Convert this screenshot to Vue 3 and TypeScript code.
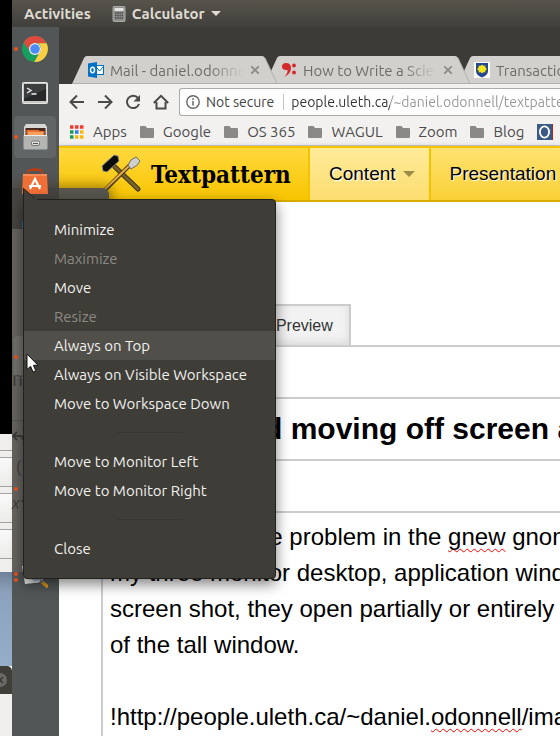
<script setup lang="ts">
import { ref } from 'vue'

interface MenuEntry {
  label?: string
  disabled?: boolean
  active?: boolean
}

interface DockEntry {
  app: string
  label: string
  dots: number
  lit?: boolean
}

const menu: MenuEntry[] = [
  { label: 'Minimize' },
  { label: 'Maximize', disabled: true },
  { label: 'Move' },
  { label: 'Resize', disabled: true },
  { label: 'Always on Top', active: true },
  { label: 'Always on Visible Workspace' },
  { label: 'Move to Workspace Down' },
  {},
  { label: 'Move to Monitor Left' },
  { label: 'Move to Monitor Right' },
  {},
  { label: 'Close' },
]

const dock: DockEntry[] = [
  { app: 'chrome', label: 'Chrome', dots: 1 },
  { app: 'terminal', label: 'Terminal', dots: 0 },
  { app: 'files', label: 'Files', dots: 1, lit: true },
  { app: 'software', label: 'Software', dots: 0 },
  { app: 'help', label: 'Help', dots: 0 },
  { app: '', label: '', dots: 0 },
  { app: '', label: '', dots: 0 },
  { app: 'calculator', label: 'Calculator', dots: 1, lit: true },
  { app: '', label: '', dots: 0 },
  { app: '', label: '', dots: 0 },
  { app: '', label: '', dots: 1 },
  { app: '', label: '', dots: 0 },
  { app: 'viewer', label: 'Image viewer', dots: 2 },
]

const tabs = [
  { icon: 'outlook', title: 'Mail - daniel.odonnell' },
  { icon: 'notes', title: 'How to Write a Scientific' },
  { icon: 'crest', title: 'Transactions' },
]

const bookmarks = ['Google', 'OS 365', 'WAGUL', 'Zoom', 'Blog']

const keypad = ['', '(', 'x²', '']

const address = ref('people.uleth.ca/~daniel.odonnell/textpattern')
const title = ref('Opened and moving off screen again')

const lines: { text: string; misspelt?: boolean }[][] = [
  [{ text: "I've found a little problem in the " }, { text: 'gnew', misspelt: true }, { text: ' gnome shell' }],
  [{ text: 'my three monitor desktop, application windows' }],
  [{ text: 'screen shot, they open partially or entirely off' }],
  [{ text: 'of the tall window.' }],
  [{ text: '' }],
  [{ text: '!http://people.uleth.ca/~daniel.' }, { text: 'odonnell', misspelt: true }, { text: '/images' }],
]
const body = ref(lines.map((l) => l.map((p) => p.text).join('')).join('\n'))
</script>

<template>
  <div class="desktop">
    <div class="neighbour">
      <div class="black"></div>
      <div class="keys"><i v-for="(k, n) in keypad" :key="n"></i></div>
      <div class="sky"></div>
      <div class="strip">
        <svg viewBox="0 0 12 28" width="12" height="28">
          <circle cx="0" cy="14" r="7" fill="#6b6963" />
          <path d="M-3 11L3 17M3 11L-3 17" stroke="#33322e" stroke-width="1.3" />
        </svg>
      </div>
      <div class="pale"></div>
    </div>

    <div class="screen">
      <header class="topbar">
        <button class="top-item">Activities</button>
        <button class="top-item app-item">
          <svg width="14" height="16" viewBox="0 0 14 16">
            <rect x="1" y="0.5" width="12" height="15" rx="1" fill="#8f8f8d" stroke="#a8a8a6" />
            <rect x="2.5" y="2" width="9" height="3" fill="#e4e4e2" />
            <path d="M3 7h8M3 9.500h8M3 12h8" stroke="#4b4b4b" stroke-width="1.500" stroke-dasharray="1.500 0.700" />
          </svg>
          <span>Calculator</span>
          <svg width="10" height="6" viewBox="0 0 10 6"><path d="M0 0h10L5 5z" fill="#dfdbd2" /></svg>
        </button>
      </header>

      <div class="work">
        <nav class="dock" aria-label="Dock">
          <template v-for="(d, n) in dock" :key="n">
            <component :is="d.app ? 'button' : 'div'" class="dock-item" :class="{ lit: d.lit }" :aria-label="d.label || undefined">
              <span class="dots"><i v-for="k in d.dots" :key="k"></i></span>
              <svg v-if="d.app === 'chrome'" width="26" height="26" viewBox="0 0 26 26">
                <circle cx="13" cy="13" r="13" fill="#17a05d" />
                <path d="M1.700 6.500A13 13 0 0 1 24.600 7.300L13 7.300A5.800 5.800 0 0 0 7.800 15.500z" fill="#dd4b3e" />
                <path d="M24.600 7.300A13 13 0 0 1 12.200 26L18.200 15.600A5.800 5.800 0 0 0 16 7.300z" fill="#ffcd42" />
                <circle cx="13" cy="13" r="6" fill="#f1f1f1" />
                <circle cx="13" cy="13" r="4.800" fill="#4c8bf5" />
              </svg>
              <svg v-else-if="d.app === 'terminal'" width="26" height="22" viewBox="0 0 26 22">
                <rect x="0.500" y="0.500" width="25" height="21" rx="1" fill="#c9c9c7" stroke="#e6e6e4" />
                <rect x="2" y="2" width="22" height="17" fill="#262829" />
                <path d="M2 2h22v5L2 17z" fill="#3b3e3f" />
                <path d="M5 6l4 2.500L5 11M9.500 12h5" fill="none" stroke="#eee" stroke-width="1.400" />
              </svg>
              <svg v-else-if="d.app === 'files'" width="25" height="26" viewBox="0 0 25 26">
                <path d="M3 0h19l2 3v8H1V3z" fill="#d7d7d5" />
                <rect x="2.500" y="4" width="20" height="8" fill="#4a2a20" />
                <path d="M3.500 6h12l1 1h5v5h-18z" fill="#e8712c" />
                <path d="M5 8h15v4H5z" fill="#f7a05f" />
                <rect x="0.500" y="11" width="24" height="14.500" rx="1" fill="#b4b4b2" />
                <path d="M1 11.500h23" stroke="#ececea" />
                <rect x="8.500" y="17" width="8" height="4.500" rx="1.500" fill="#dededc" stroke="#777" />
                <path d="M10 19.500h5" stroke="#555" />
              </svg>
              <svg v-else-if="d.app === 'software'" width="26" height="26" viewBox="0 0 26 26">
                <path d="M6 8V4q0-2 2-2h10q2 0 2 2v4M10.500 2.500q0-2 2.500-2t2.500 2" fill="none" stroke="#b83c12" stroke-width="1.800" />
                <path d="M1 6h24l1 20H0z" fill="#ef6f37" />
                <path d="M1 6h24v2H1z" fill="#f68b59" />
                <path d="M8 21l5-10 5 10M7 18h12" fill="none" stroke="#fff" stroke-width="2.200" />
              </svg>
              <svg v-else-if="d.app === 'help'" width="26" height="26" viewBox="0 0 26 26">
                <rect y="9" width="26" height="7" fill="#2f6f9f" />
              </svg>
              <svg v-else-if="d.app === 'viewer'" width="26" height="24" viewBox="0 0 26 24">
                <path d="M0 1l9-1 3 18-9 1z" fill="#e9e9e7" />
                <circle cx="14" cy="9" r="8" fill="#8fa6c9" stroke="#dcdcdc" stroke-width="2" />
                <path d="M20 17l6 5" stroke="#e09a1e" stroke-width="3.500" />
                <path d="M18 15l3 2.500" stroke="#777" stroke-width="2.500" />
              </svg>
            </component>
          </template>
        </nav>

        <section class="browser">
          <div class="tabstrip">
            <div v-for="(t, n) in tabs" :key="t.title" class="tab" :style="{ zIndex: 3 - n }">
              <svg class="tab-shape" width="205" height="28" viewBox="0 0 205 28">
                <path d="M0 28L12 2q1-2 3-2h175q2 0 3 2l12 26z" fill="#d2d0cd" />
                <path d="M0 27.500h205L193 2" fill="none" stroke="#b1afac" />
              </svg>
              <svg v-if="t.icon === 'outlook'" class="favicon" width="16" height="16" viewBox="0 0 16 16">
                <rect x="8" y="3.500" width="7.500" height="9" fill="#fff" stroke="#0072c6" />
                <path d="M9 6l2.500 3L15 5" fill="none" stroke="#0072c6" />
                <path d="M0 1.500L9 0v16L0 14.500z" fill="#0072c6" />
                <ellipse cx="4.500" cy="8" rx="2" ry="2.700" fill="none" stroke="#fff" stroke-width="1.500" />
              </svg>
              <svg v-else-if="t.icon === 'notes'" class="favicon" width="16" height="16" viewBox="0 0 16 16">
                <path d="M1 4.500Q1 1 5 1q5 0 5 5 0 6-7 9 4-3.500 3.500-7Q1 8.500 1 4.500z" fill="#d4282d" />
                <circle cx="13" cy="3.500" r="1.900" fill="#d4282d" />
                <circle cx="13" cy="10.500" r="1.900" fill="#d4282d" />
              </svg>
              <svg v-else class="favicon" width="16" height="16" viewBox="0 0 16 16">
                <rect width="16" height="16" fill="#fff" />
                <path d="M2 1h12v8q0 4-6 6.500Q2 13 2 9z" fill="#27468f" />
                <path d="M8 2.500l1.300 1.500 2-.5v2L13 7l-1.700 1.500v2l-2-.5L8 11.500 6.700 10l-2 .5v-2L3 7l1.700-1.500v-2l2 .5z" fill="#f5e51b" />
                <circle cx="8" cy="7" r="3.500" fill="#f5e51b" />
              </svg>
              <span class="tab-title">{{ t.title }}</span>
              <button class="tab-close" aria-label="Close tab">
                <svg width="8" height="8" viewBox="0 0 8 8"><path d="M0 0l8 8M8 0L0 8" stroke="#8a8886" stroke-width="1.600" /></svg>
              </button>
            </div>
          </div>

          <div class="toolbar">
            <button class="tool" aria-label="Back">
              <svg width="16" height="16" viewBox="0 0 16 16"><path d="M15 8H2M8 1.500L1.500 8 8 14.500" /></svg>
            </button>
            <button class="tool" aria-label="Forward">
              <svg width="16" height="16" viewBox="0 0 16 16"><path d="M1 8h13M8 1.500L14.500 8 8 14.500" /></svg>
            </button>
            <button class="tool" aria-label="Reload">
              <svg width="16" height="16" viewBox="0 0 16 16"><path d="M13 4A6.200 6.200 0 1 0 14 10" /><path class="solid" d="M15 1v6.500H8.500z" /></svg>
            </button>
            <button class="tool" aria-label="Home">
              <svg width="16" height="16" viewBox="0 0 16 16"><path d="M0.800 9L8 1.800 15.200 9M3.500 8v6.500h9V8" /></svg>
            </button>
            <div class="omnibox">
              <button class="security">
                <svg width="14" height="14" viewBox="0 0 14 14">
                  <circle cx="7" cy="7" r="6.200" fill="none" stroke="#666" stroke-width="1.400" />
                  <path d="M7 6v4.500M7 3.300v1.600" stroke="#666" stroke-width="1.500" />
                </svg>
                <span>Not secure</span>
              </button>
              <input v-model="address" class="address" aria-label="Address" spellcheck="false" />
            </div>
          </div>

          <nav class="bookmarks" aria-label="Bookmarks">
            <a href="#apps" class="bookmark">
              <svg width="14" height="14" viewBox="0 0 14 14">
                <path d="M0 2h3.500M5 2h3.500M10 2h3.500" stroke="#ee3b30" stroke-width="3.500" />
                <path d="M0 7h3.500" stroke="#1f9d55" stroke-width="3.500" />
                <path d="M5 7h3.500" stroke="#2a7de1" stroke-width="3.500" />
                <path d="M10 7h3.500M5 12h8.500" stroke="#f6b70c" stroke-width="3.500" stroke-dasharray="3.500 1.500" />
                <path d="M0 12h3.500" stroke="#1f9d55" stroke-width="3.500" />
              </svg>
              <span>Apps</span>
            </a>
            <a v-for="b in bookmarks" :key="b" href="#folder" class="bookmark">
              <svg width="14" height="12" viewBox="0 0 14 12"><path d="M0 1q0-1 1-1h4.500l1.500 2h6q1 0 1 1v8q0 1-1 1H1q-1 0-1-1z" fill="#8b8987" /></svg>
              <span>{{ b }}</span>
            </a>
            <a href="#other" class="bookmark" aria-label="Bookmark">
              <svg width="16" height="16" viewBox="0 0 16 16">
                <rect width="15" height="16" fill="#3c5a86" />
                <rect x="15" width="1" height="16" fill="#b22" />
                <ellipse cx="7.500" cy="8" rx="4.600" ry="5.600" fill="none" stroke="#fff" stroke-width="1.800" />
              </svg>
            </a>
          </nav>

          <header class="masthead">
            <a class="brand" href="#home">
              <svg width="40" height="40" viewBox="0 0 40 40">
                <path d="M14 13l23 22" stroke="#3f3218" stroke-width="5" stroke-linecap="round" />
                <path d="M14 13l23 22" stroke="#786428" stroke-width="3" stroke-linecap="round" />
                <path d="M2 38L30 10" stroke="#4c3a1c" stroke-width="4" />
                <path d="M2 37L30 10" stroke="#e8b040" stroke-width="2" />
                <path d="M27 11q2-6 8-8l4 4q-2 5-9 8z" fill="#cfcfcd" stroke="#6d6a62" />
                <path d="M1 12L13 1l4 1 1 5L6 18l-4-1z" fill="#0c0c0c" stroke="#8d8d8d" />
              </svg>
              <span>Textpattern</span>
            </a>
            <a class="nav-item current" href="#content">
              <span>Content</span>
              <svg width="12" height="6" viewBox="0 0 12 6"><path d="M0 0h12L6 6z" fill="#9d8b49" /></svg>
            </a>
            <a class="nav-item" href="#presentation"><span>Presentation</span></a>
          </header>

          <main class="editor">
            <div class="views">
              <button class="view">Text</button>
              <button class="view">HTML</button>
              <button class="view">Preview</button>
            </div>
            <div class="fields">
              <input v-model="title" class="title" aria-label="Title" spellcheck="false" />
              <div class="body">
                <div class="marks" aria-hidden="true">
                  <div v-for="(l, n) in lines" :key="n"><span v-for="(p, k) in l" :key="k" :class="{ misspelt: p.misspelt }">{{ p.text }}</span></div>
                </div>
                <textarea v-model="body" class="text" aria-label="Body" wrap="off" spellcheck="false"></textarea>
              </div>
            </div>
          </main>
        </section>
      </div>
    </div>

    <div class="calc">
      <div class="calc-title"></div>
      <div class="calc-body">
        <span class="calc-display">m</span>
        <div class="calc-keys">
          <svg width="12" height="12" viewBox="0 0 12 12"><path d="M5 1L1 5l4 4M1 5h7q3 0 3 4" fill="none" stroke="#3e3d38" stroke-width="2" /></svg>
          <span>(</span>
          <em>x²</em>
        </div>
      </div>
    </div>

    <div class="popup">
      <svg class="pointer" width="14" height="12" viewBox="0 0 14 12">
        <path d="M0 12V0L12 10.500H14V12z" fill="#3e3d38" />
        <path d="M0.500 12V0.500L12 10.500" fill="none" stroke="#22211e" />
      </svg>
      <div class="menu" role="menu">
        <template v-for="(m, n) in menu" :key="n">
          <button v-if="m.label" class="menu-item" :class="{ active: m.active }" role="menuitem" :disabled="m.disabled">{{ m.label }}</button>
          <div v-else class="menu-gap" role="separator"></div>
        </template>
      </div>
    </div>

    <svg class="cursor" width="13" height="20" viewBox="0 0 13 20">
      <path d="M1 1v15.500l3.600-3.200 2.400 5.700 2.800-1.200-2.400-5.500H12z" fill="#fff" stroke="#111" stroke-width="1" />
    </svg>
  </div>
</template>

<style>
body {
  margin: 0;
  overflow: hidden;
}
</style>

<style scoped>
* {
  box-sizing: border-box;
}
button,
input,
textarea {
  margin: 0;
  padding: 0;
  border: 0;
  background: none;
  font: inherit;
  color: inherit;
  outline: none;
}
a {
  color: inherit;
  text-decoration: none;
}
svg {
  display: block;
  flex: none;
}
.desktop {
  position: relative;
  display: flex;
  height: 100vh;
  overflow: hidden;
  background: #fff;
  font-family: Ubuntu, "Noto Sans", sans-serif;
  font-size: 15px;
}
.neighbour {
  display: flex;
  flex-direction: column;
  flex: none;
  width: 12px;
}
.black {
  height: 434px;
  background: #000;
}
.keys {
  display: flex;
  flex-direction: column;
  gap: 6px;
  height: 138px;
  padding-top: 16px;
  overflow: hidden;
  background: #f0efed;
}
.keys i {
  flex: none;
  height: 30px;
  border-top: 1px solid #a5a4a2;
  border-bottom: 1px solid #a5a4a2;
  background: linear-gradient(#fafafa, #ececea);
}
.keys i:first-child {
  height: 1px;
  border-bottom: 0;
}
.sky {
  height: 94px;
  background: linear-gradient(#6f8298, #8ca2bc 20px, #96adc9);
}
.strip {
  height: 28px;
  border-radius: 0 5px 0 0;
  background: #3f3e39;
}
.pale {
  flex: 1;
  background: #f0efed;
}
.screen {
  display: flex;
  flex-direction: column;
  flex: 1;
  min-width: 0;
}
.topbar {
  display: flex;
  flex: none;
  gap: 21px;
  height: 27px;
  padding-left: 12px;
  background: linear-gradient(#57544c, #403f3a);
  color: #dfdbd2;
  font-weight: 600;
}
.top-item {
  display: flex;
  align-items: center;
}
.app-item {
  gap: 6px;
}
.work {
  display: flex;
  flex: 1;
  min-height: 0;
  background: #525657;
}
.dock {
  position: relative;
  z-index: 2;
  display: flex;
  flex-direction: column;
  flex: none;
  gap: 2px;
  width: 47px;
  padding: 1px 3px 0 2px;
}
.dock-item {
  position: relative;
  display: flex;
  flex: none;
  align-items: center;
  justify-content: center;
  width: 42px;
  height: 42px;
  border-radius: 4px;
}
.dock-item.lit {
  background: rgba(255, 255, 255, 0.09);
}
.dots {
  position: absolute;
  left: 0;
  top: 0;
  display: flex;
  flex-direction: column;
  justify-content: center;
  gap: 2px;
  height: 100%;
}
.dots i {
  width: 4px;
  height: 4px;
  border-radius: 2px;
  background: #e95420;
}
.browser {
  position: relative;
  z-index: 0;
  display: flex;
  flex-direction: column;
  flex: 1;
  min-width: 0;
  overflow: hidden;
}
.tabstrip {
  display: flex;
  flex: none;
  height: 57px;
  padding: 29px 0 0 13px;
  background: #3c3b37;
}
.tab {
  position: relative;
  display: flex;
  flex: none;
  align-items: center;
  width: 205px;
  height: 28px;
  margin-right: -12px;
  padding: 0 18px 0 16px;
  color: #6e6c6a;
}
.tab-shape {
  position: absolute;
  left: 0;
  top: 0;
}
.favicon {
  position: relative;
  margin-right: 6px;
}
.tab-title {
  position: relative;
  flex: 1;
  overflow: hidden;
  white-space: nowrap;
  -webkit-mask-image: linear-gradient(90deg, #000 75%, transparent);
  mask-image: linear-gradient(90deg, #000 75%, transparent);
}
.tab-close {
  position: relative;
  margin-left: 8px;
}
.toolbar {
  display: flex;
  flex: none;
  align-items: center;
  gap: 12px;
  height: 34px;
  padding: 2px 0 0 10px;
  background: #f2f1f0;
  font-size: 14px;
}
.tool svg {
  fill: none;
  stroke: #4a4a48;
  stroke-width: 2;
}
.tool .solid {
  fill: #4a4a48;
  stroke: none;
}
.omnibox {
  display: flex;
  align-items: center;
  flex: 1;
  height: 28px;
  margin-left: -2px;
  padding-left: 6px;
  border: 1px solid #adabaa;
  border-right: 0;
  border-radius: 3px 0 0 3px;
  background: #fff;
}
.security {
  display: flex;
  flex: none;
  align-items: center;
  gap: 6px;
  height: 16px;
  padding-right: 9px;
  border-right: 1px solid #c4c4c4;
  color: #444;
}
.address {
  flex: 1;
  min-width: 0;
  margin-left: 7px;
  background: linear-gradient(90deg, #333 99px, #969696 99px);
  -webkit-background-clip: text;
  background-clip: text;
  -webkit-text-fill-color: transparent;
}
.bookmarks {
  display: flex;
  flex: none;
  align-items: center;
  gap: 13px;
  height: 28px;
  padding-left: 11px;
  border-bottom: 1px solid #cfcdcb;
  background: #f2f1f0;
  color: #4c4c4c;
}
.bookmark {
  display: flex;
  flex: none;
  align-items: center;
  gap: 9px;
}
.masthead {
  display: flex;
  flex: none;
  height: 56px;
  border-top: 2px solid #f3c300;
  border-bottom: 2px solid #d9aa00;
  background: linear-gradient(#ffd83d, #f8c500);
  box-shadow: 0 1px 5px rgba(0, 0, 0, 0.3);
  font-family: "Liberation Sans", Arial, sans-serif;
  font-size: 19px;
}
.brand {
  display: flex;
  flex: none;
  align-items: center;
  gap: 10px;
  width: 249px;
  padding-left: 42px;
  color: #000;
  font-family: "Droid Serif", "DejaVu Serif Condensed", "DejaVu Serif", serif;
  font-size: 24px;
  font-weight: 700;
}
.nav-item {
  display: flex;
  flex: none;
  align-items: center;
  gap: 7px;
  padding: 0 14px 0 19px;
  border-right: 2px solid #f3c300;
  background: linear-gradient(#ffe270, #f9d137);
  text-shadow: 1px 1px 1px #fff;
}
.nav-item.current {
  border-left: 2px solid #f3c300;
  background: linear-gradient(#ffeb9a, #fbdd70);
}
.editor {
  display: flex;
  flex: 1;
  flex-direction: column;
  min-height: 0;
  padding: 102px 0 0 42px;
  background: #fff;
  color: #000;
  font-family: "Liberation Sans", Arial, sans-serif;
}
.views {
  display: flex;
  flex: none;
  gap: 6px;
  height: 41px;
  font-size: 16px;
}
.view {
  padding: 0 16px;
  border: 2px solid #ccc;
  border-bottom: 0;
  background: #f2f2f2;
  box-shadow: inset 0 -3px 8px rgba(0, 0, 0, 0.1);
  color: #333;
}
.fields {
  display: flex;
  flex: 1;
  flex-direction: column;
  min-height: 0;
  gap: 50px;
  padding-top: 50px;
  border-top: 2px solid #ccc;
}
.title {
  flex: none;
  width: 100%;
  height: 64px;
  padding-left: 6px;
  border: 2px solid #ccc;
  border-right: 0;
  font-size: 30px;
  font-weight: 700;
}
.body {
  position: relative;
  flex: 1;
  min-height: 0;
  border: 2px solid #ccc;
  border-right: 0;
  border-bottom: 0;
  font-size: 24px;
  line-height: 36px;
}
.text,
.marks {
  display: block;
  width: 100%;
  height: 100%;
  padding: 6px 0 0 7px;
  overflow: hidden;
  white-space: pre;
}
.text {
  position: relative;
  resize: none;
}
.marks {
  position: absolute;
  inset: 0;
  color: transparent;
}
.marks div {
  min-height: 36px;
}
.misspelt {
  text-decoration: underline wavy #f00 1px;
  text-decoration-skip-ink: none;
  text-underline-offset: 3px;
}
.calc {
  position: absolute;
  z-index: 1;
  left: 12px;
  top: 188px;
  width: 97px;
}
.calc-title {
  height: 41px;
  border-radius: 0 6px 0 0;
  background: linear-gradient(90deg, #454440 47px, #57554e 47px);
  box-shadow: 3px -3px 12px rgba(60, 40, 0, 0.45);
}
.calc-body {
  width: 47px;
  height: 343px;
  background: #676460;
  color: #3e3d38;
}
.calc-display {
  display: block;
  height: 192px;
  padding-top: 140px;
  border-bottom: 1px solid #555;
  font-size: 20px;
  line-height: 20px;
}
.calc-keys {
  display: flex;
  flex-direction: column;
  gap: 12px;
  padding-top: 10px;
  font-size: 16px;
  line-height: 24px;
}
.calc-keys span {
  padding-left: 4px;
}
.popup {
  position: absolute;
  z-index: 3;
  left: 23px;
  top: 188px;
  width: 253px;
}
.pointer {
  position: relative;
  margin-bottom: -1px;
}
.menu {
  display: flex;
  flex-direction: column;
  padding: 15px 0;
  border: 1px solid #22211e;
  border-radius: 0 4px 4px 4px;
  background: #3e3d38;
  box-shadow: 0 5px 14px rgba(0, 0, 0, 0.5);
  color: #f2f1ee;
}
.menu-item {
  height: 29px;
  padding-left: 30px;
  text-align: left;
}
.menu-item.active {
  background: #504f49;
}
.menu-item:disabled {
  color: #8b8a85;
}
.menu-gap {
  display: flex;
  align-items: center;
  justify-content: center;
  height: 29px;
}
.menu-gap::before {
  content: "";
  width: 66px;
  height: 1px;
  background: #383732;
}
.cursor {
  position: absolute;
  z-index: 4;
  left: 26px;
  top: 353px;
}
</style>
